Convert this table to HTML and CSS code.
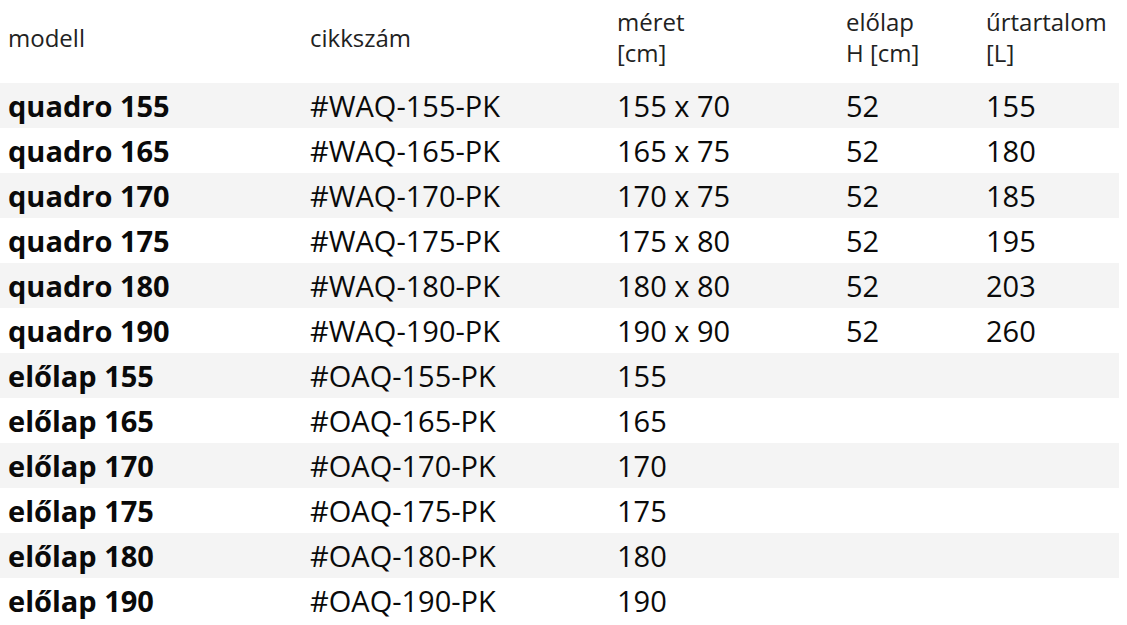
FILE: index.html
```html
<!DOCTYPE html>
<html lang="hu">
<head>
<meta charset="utf-8">
<link rel="stylesheet" href="styles.css">
</head>
<body>
<table class="spec">
  <colgroup>
    <col class="c1"><col class="c2"><col class="c3"><col class="c4"><col class="c5">
  </colgroup>
  <thead>
    <tr>
      <th>modell</th>
      <th>cikkszám</th>
      <th>méret<br>[cm]</th>
      <th>előlap<br>H [cm]</th>
      <th>űrtartalom<br>[L]</th>
    </tr>
  </thead>
  <tbody>
    <tr><td class="name">quadro 155</td><td>#WAQ-155-PK</td><td>155 x 70</td><td>52</td><td>155</td></tr>
    <tr><td class="name">quadro 165</td><td>#WAQ-165-PK</td><td>165 x 75</td><td>52</td><td>180</td></tr>
    <tr><td class="name">quadro 170</td><td>#WAQ-170-PK</td><td>170 x 75</td><td>52</td><td>185</td></tr>
    <tr><td class="name">quadro 175</td><td>#WAQ-175-PK</td><td>175 x 80</td><td>52</td><td>195</td></tr>
    <tr><td class="name">quadro 180</td><td>#WAQ-180-PK</td><td>180 x 80</td><td>52</td><td>203</td></tr>
    <tr><td class="name">quadro 190</td><td>#WAQ-190-PK</td><td>190 x 90</td><td>52</td><td>260</td></tr>
    <tr><td class="name">előlap 155</td><td>#OAQ-155-PK</td><td>155</td><td></td><td></td></tr>
    <tr><td class="name">előlap 165</td><td>#OAQ-165-PK</td><td>165</td><td></td><td></td></tr>
    <tr><td class="name">előlap 170</td><td>#OAQ-170-PK</td><td>170</td><td></td><td></td></tr>
    <tr><td class="name">előlap 175</td><td>#OAQ-175-PK</td><td>175</td><td></td><td></td></tr>
    <tr><td class="name">előlap 180</td><td>#OAQ-180-PK</td><td>180</td><td></td><td></td></tr>
    <tr><td class="name">előlap 190</td><td>#OAQ-190-PK</td><td>190</td><td></td><td></td></tr>
  </tbody>
</table>
</body>
</html>
```
FILE: styles.css
```css
html, body {
  margin: 0;
  padding: 0;
  background: #ffffff;
}
body {
  font-family: "Open Sans", "Noto Sans", sans-serif;
  color: #0a0a0a;
}
.spec {
  border-collapse: collapse;
  border-spacing: 0;
  width: 1119px;
  table-layout: fixed;
}
.c1 { width: 302px; }
.c2 { width: 307px; }
.c3 { width: 229px; }
.c4 { width: 140px; }
.c5 { width: 141px; }
.spec th {
  height: 83px;
  box-sizing: border-box;
  padding: 0 8px 9px 8px;
  text-align: left;
  vertical-align: middle;
  font-weight: 400;
  font-size: 24px;
  line-height: 31px;
  color: #222222;
}
.spec td {
  height: 45px;
  padding: 0 8px;
  text-align: left;
  vertical-align: middle;
  font-size: 29px;
  line-height: 32px;
  white-space: nowrap;
}
.spec td.name {
  font-weight: 700;
}
.spec tbody tr:nth-child(odd) td {
  background: #f4f4f4;
}
```
